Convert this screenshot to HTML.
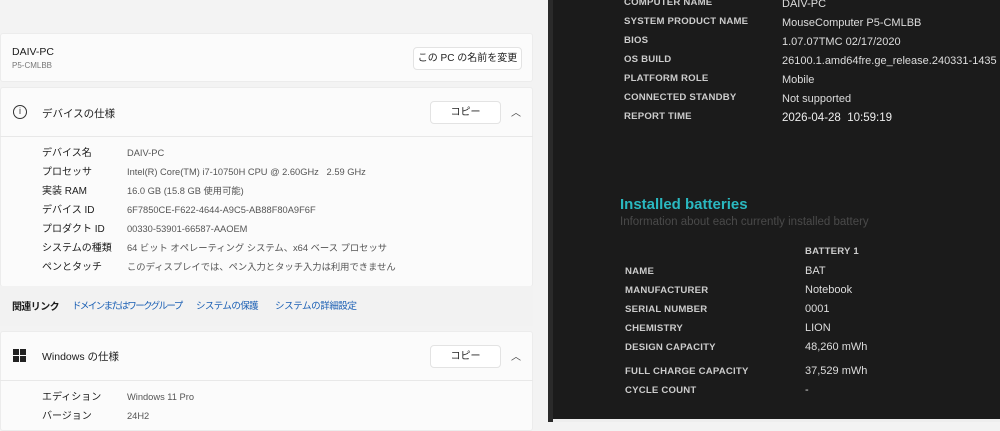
<!DOCTYPE html><html><head><meta charset="utf-8"><style>
*{margin:0;padding:0;box-sizing:border-box}
body{width:1000px;height:422px;overflow:hidden;position:relative;background:#f3f3f3;font-family:"Liberation Sans","Noto Sans CJK JP",sans-serif;}
.a{position:absolute;white-space:nowrap}
.card{position:absolute;left:0;width:533px;background:#fbfbfb;border:1px solid #ececec;border-radius:3px}
.btn{position:absolute;background:#fff;border:1px solid #e3e3e3;border-radius:4px;font-size:10px;color:#222;text-align:center;white-space:nowrap}
.l{font-size:10px;color:#1b1b1b}
.v{font-size:9.3px;color:#555}
.dl{font-weight:bold;font-size:9.6px;color:#ccc;letter-spacing:.2px}
.dv{font-size:11px;color:#ddd}
.lk{font-size:9.5px;color:#1a5fb4}
</style></head><body>
<div class="card" style="top:33px;height:49px"></div>
<div class="a" style="left:12px;top:46px;font-size:10.5px;color:#1b1b1b">DAIV-PC</div>
<div class="a" style="left:12px;top:61px;font-size:8px;color:#777">P5-CMLBB</div>
<div class="btn" style="left:413px;top:47px;width:109px;height:23px;line-height:21px">この PC の名前を変更</div>
<div class="card" style="top:87px;height:200px"></div>
<div class="a" style="left:0;top:136px;width:533px;height:1px;background:#e8e8e8"></div>
<div class="a" style="left:13px;top:105px;width:14px;height:14px;border:1.2px solid #333;border-radius:50%;font-size:9px;text-align:center;line-height:11px;color:#333">i</div>
<div class="a" style="left:42px;top:106px;font-size:10.5px;color:#1b1b1b">デバイスの仕様</div>
<div class="btn" style="left:430px;top:101px;width:71px;height:23px;line-height:21px">コピー</div>
<div class="a" style="left:511px;top:104px;font-size:10px;color:#444">︿</div>
<div class="a l" style="left:42px;top:144px;line-height:19px">デバイス名<br>プロセッサ<br>実装 RAM<br>デバイス ID<br>プロダクト ID<br>システムの種類<br>ペンとタッチ</div>
<div class="a v" style="left:127px;top:144px;line-height:19px">DAIV-PC<br>Intel(R) Core(TM) i7-10750H CPU @ 2.60GHz &nbsp; 2.59 GHz<br>16.0 GB (15.8 GB 使用可能)<br>6F7850CE-F622-4644-A9C5-AB88F80A9F6F<br>00330-53901-66587-AAOEM<br>64 ビット オペレーティング システム、x64 ベース プロセッサ<br>このディスプレイでは、ペン入力とタッチ入力は利用できません</div>
<div class="a" style="left:0;top:286px;width:533px;height:40px;background:#f2f2f2"></div>
<div class="a" style="left:12px;top:298px;font-size:10px;color:#1b1b1b;font-weight:bold;letter-spacing:-.6px">関連リンク</div>
<div class="a lk" style="left:72px;top:298px;letter-spacing:-1.6px">ドメインまたはワークグループ</div>
<div class="a lk" style="left:196px;top:298px;letter-spacing:-.6px">システムの保護</div>
<div class="a lk" style="left:275px;top:298px;letter-spacing:-.4px">システムの詳細設定</div>
<div class="card" style="top:331px;height:100px"></div>
<div class="a" style="left:0;top:380px;width:533px;height:1px;background:#e8e8e8"></div>
<div class="a" style="left:13px;top:349px;width:13px;height:13px;display:grid;grid-template-columns:6px 6px;gap:1px"><i style="background:#222"></i><i style="background:#222"></i><i style="background:#222"></i><i style="background:#222"></i></div>
<div class="a" style="left:42px;top:349px;font-size:10.5px;color:#1b1b1b">Windows の仕様</div>
<div class="btn" style="left:430px;top:345px;width:71px;height:23px;line-height:21px">コピー</div>
<div class="a" style="left:511px;top:348px;font-size:10px;color:#444">︿</div>
<div class="a l" style="left:42px;top:388px;line-height:19px">エディション<br>バージョン</div>
<div class="a v" style="left:127px;top:388px;line-height:19px">Windows 11 Pro<br>24H2</div>
<div class="a" style="left:533px;top:0;width:15px;height:422px;background:#f3f3f3"></div>
<div class="a" style="left:548px;top:0;width:5px;height:422px;background:#2a2a2a"></div>
<div class="a" style="left:553px;top:0;width:447px;height:422px;background:#1b1b1b"></div>
<div class="a" style="left:553px;top:419px;width:447px;height:3px;background:#eee"></div>
<div class="a dl" style="left:624px;top:-7px;line-height:19px">COMPUTER NAME<br>SYSTEM PRODUCT NAME<br>BIOS<br>OS BUILD<br>PLATFORM ROLE<br>CONNECTED STANDBY<br>REPORT TIME</div>
<div class="a dv" style="left:782px;top:-5px;line-height:19px">DAIV-PC<br>MouseComputer P5-CMLBB<br>1.07.07TMC 02/17/2020<br>26100.1.amd64fre.ge_release.240331-1435<br>Mobile<br>Not supported<br><span style="color:#eee;font-size:11.5px">2026-04-28 &nbsp;10:59:19</span></div>
<div class="a" style="left:620px;top:196px;font-size:15px;font-weight:bold;color:#2ab8c0">Installed batteries</div>
<div class="a" style="left:620px;top:216px;font-size:11.5px;color:#4a4a4a">Information about each currently installed battery</div>
<div class="a dl" style="left:805px;top:246px">BATTERY 1</div>
<div class="a dl" style="left:625px;top:262px;line-height:19px">NAME<br>MANUFACTURER<br>SERIAL NUMBER<br>CHEMISTRY<br>DESIGN CAPACITY</div>
<div class="a dl" style="left:625px;top:362px;line-height:19px">FULL CHARGE CAPACITY<br>CYCLE COUNT</div>
<div class="a dv" style="left:805px;top:262px;line-height:19px">BAT<br>Notebook<br>0001<br>LION<br>48,260 mWh</div>
<div class="a dv" style="left:805px;top:362px;line-height:19px">37,529 mWh<br>-</div>
</body></html>
